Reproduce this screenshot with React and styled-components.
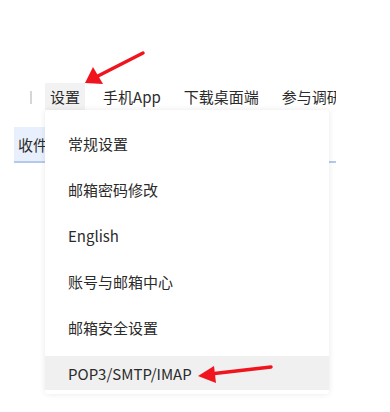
import styled, { createGlobalStyle } from "styled-components"

const GlobalStyle = createGlobalStyle`
  html, body {
    margin: 0;
    background: #fff;
  }
  body {
    font-family: "Noto Sans CJK SC", "Noto Sans", sans-serif;
    color: #333;
  }
`

const Page = styled.div`
  position: relative;
  width: 390px;
  height: 412px;
  overflow: hidden;
`

const Frame = styled.div`
  width: 322px;
  margin-left: 14px;
  padding-top: 83px;
  overflow: hidden;
`

const NavBar = styled.div`
  display: flex;
  align-items: center;
  height: 27px;
  padding-left: 16px;
  gap: 13px;
  white-space: nowrap;
`

const Divider = styled.span`
  flex-shrink: 0;
  width: 2px;
  height: 13px;
  background: #d6d6d6;
  margin-top: 2px;
`

const NavItem = styled.span`
  display: flex;
  align-items: center;
  height: 100%;
  padding: 0 5px;
  font-size: 15px;
  color: #2b2b2b;
  background: ${(p) => (p.active ? "#f2f2f2" : "transparent")};
  flex-shrink: 0;
`

const TabBar = styled.div`
  display: flex;
  margin-top: 17px;
  border-bottom: 2px solid #b3c9ee;
`

const Tab = styled.div`
  height: 34px;
  padding-left: 4px;
  width: 60px;
  display: flex;
  align-items: center;
  font-size: 15px;
  color: #2b2b2b;
  background: #e8f0fd;
`

const Menu = styled.ul`
  position: absolute;
  left: 45px;
  top: 110px;
  width: 284px;
  margin: 0;
  padding: 16px 0 4px;
  list-style: none;
  background: #fff;
  border-radius: 3px;
  box-shadow: 0 0 6px rgba(0, 0, 0, 0.09);
  display: flex;
  flex-direction: column;
  gap: 12px;
`

const MenuItem = styled.li`
  height: 34px;
  display: flex;
  align-items: center;
  padding-left: 23px;
  font-size: 15px;
  color: #2b2b2b;
  background: ${(p) => (p.hover ? "#f0f0f0" : "transparent")};
`

const Arrow = styled.svg`
  position: absolute;
  left: 0;
  top: 0;
  pointer-events: none;
`

const navItems = ["设置", "手机App", "下载桌面端", "参与调研"]
const menuItems = [
  "常规设置",
  "邮箱密码修改",
  "English",
  "账号与邮箱中心",
  "邮箱安全设置",
  "POP3/SMTP/IMAP",
]

export default function App() {
  return (
    <Page>
      <GlobalStyle />
      <Frame>
        <NavBar>
          <Divider />
          {navItems.map((n, i) => (
            <NavItem key={n} active={i === 0}>
              {n}
            </NavItem>
          ))}
        </NavBar>
        <TabBar>
          <Tab>收件</Tab>
        </TabBar>
      </Frame>
      <Menu>
        {menuItems.map((m, i) => (
          <MenuItem key={m} hover={i === menuItems.length - 1}>
            {m}
          </MenuItem>
        ))}
      </Menu>
      <Arrow width="390" height="412" viewBox="0 0 390 412">
        <line x1="143" y1="53" x2="96" y2="77" stroke="#f0141e" strokeWidth="3.5" strokeLinecap="round" />
        <polygon points="85,83 93,67 103,84" fill="#f0141e" />
        <line x1="271" y1="367" x2="210" y2="374" stroke="#f0141e" strokeWidth="3.5" strokeLinecap="round" />
        <polygon points="198,376 214,366 216,383" fill="#f0141e" />
      </Arrow>
    </Page>
  )
}
